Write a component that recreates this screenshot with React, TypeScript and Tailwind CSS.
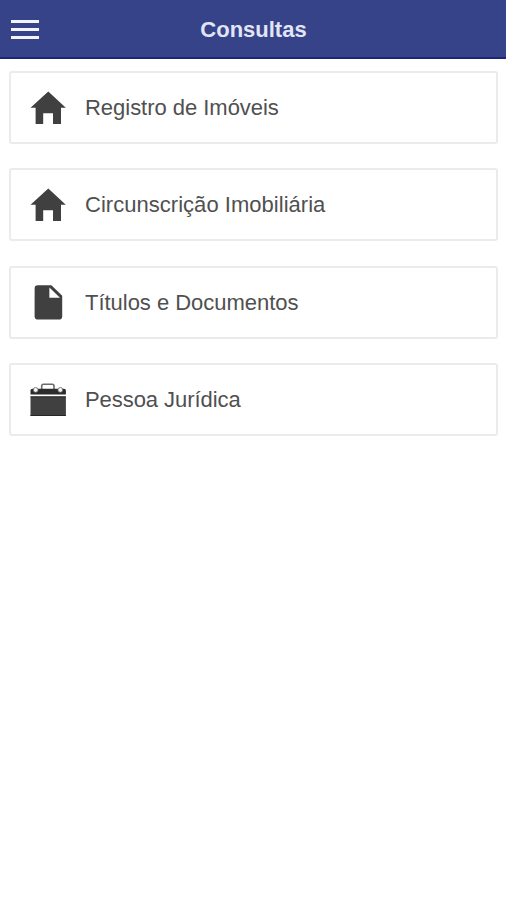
import type { ReactNode } from "react";

function HomeIcon() {
  return (
    <svg viewBox="0 0 38 38" className="h-[38px] w-[38px] shrink-0 fill-[#404041]">
      <path d="M19.3 2.4 36.8 18.8H32V34.9H24V24.2H14.2V34.9H6.6V18.8H1.5Z" />
    </svg>
  );
}

function DocumentIcon() {
  return (
    <svg viewBox="0 0 38 38" className="h-[38px] w-[38px] shrink-0">
      <path
        fill="#404041"
        d="M8.6 2.2H22.4L33.2 12.8V33.2Q33.2 36.6 29.8 36.6H9Q5.6 36.6 5.6 33.2V5.4Q5.6 2.2 8.6 2.2Z"
      />
      <path fill="#fff" d="M20.4 4.4V14.8H31Z" />
    </svg>
  );
}

function BriefcaseIcon() {
  return (
    <svg viewBox="0 0 38 38" className="h-[38px] w-[38px] shrink-0">
      <path fill="none" stroke="#6a6a6a" strokeWidth="1.6" d="M12.7 8V5Q12.7 3.3 14.4 3.3H23.3Q25 3.3 25 5V8" />
      <path fill="#2c2c2d" d="M1.5 13.4V9.4Q1.5 7.8 3.4 7.8H35Q36.9 7.8 36.9 9.4V13.4Z" />
      <path fill="#404041" d="M1.5 15.4H36.9V35H1.5Z" />
      <path fill="none" stroke="#262626" strokeWidth="1" d="M1.5 15.9H36.9M1.5 34.5H36.9" />
      <g fill="#f5f5f5" stroke="#666" strokeWidth="0.8">
        <circle cx="6.7" cy="8.9" r="2.4" />
        <circle cx="31.3" cy="8.9" r="2.4" />
      </g>
    </svg>
  );
}

const items: { label: string; icon: ReactNode; tracking: string }[] = [
  { label: "Registro de Imóveis", icon: <HomeIcon />, tracking: "tracking-[-0.03px]" },
  { label: "Circunscrição Imobiliária", icon: <HomeIcon />, tracking: "tracking-[0.03px]" },
  { label: "Títulos e Documentos", icon: <DocumentIcon />, tracking: "tracking-[-0.03px]" },
  { label: "Pessoa Jurídica", icon: <BriefcaseIcon />, tracking: "tracking-[-0.06px]" },
];

export default function App() {
  return (
    <div className="min-h-[900px] bg-white font-['Liberation_Sans',Arial,sans-serif]">
      <header className="grid h-[59px] grid-cols-[1fr_auto_1fr] items-center border-b-2 border-[#1b2679] bg-[#364389] pl-[11px]">
        <button aria-label="Menu" className="flex w-7 flex-col gap-[5px] pt-px">
          <span className="h-[3px] bg-[#f4f5fc]" />
          <span className="h-[3px] bg-[#f4f5fc]" />
          <span className="h-[3px] bg-[#f4f5fc]" />
        </button>
        <h1 className="pt-0.5 pr-[10px] text-[22px] leading-none font-bold text-[#e1e5f6]">Consultas</h1>
      </header>
      <nav className="flex flex-col gap-[24.4px] pt-3 pr-2 pl-[9px]">
        {items.map((item) => (
          <a
            key={item.label}
            className="flex h-[73px] items-center gap-[18px] rounded-[3px] border-2 border-[#ebebeb] pl-[18px]"
          >
            {item.icon}
            <span className={`pt-px text-[22px] leading-none text-[#505050] ${item.tracking}`}>{item.label}</span>
          </a>
        ))}
      </nav>
    </div>
  );
}
